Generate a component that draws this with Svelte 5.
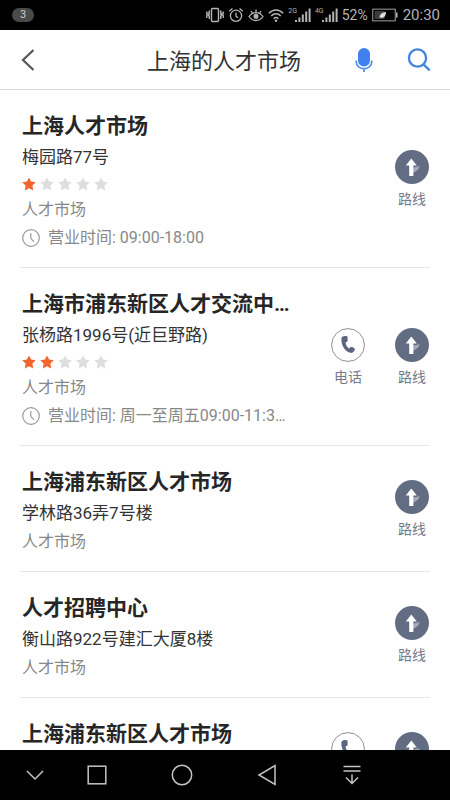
<script>
  const places = [
    { name: '上海人才市场', address: '梅园路77号', stars: 1, category: '人才市场', hours: '09:00-18:00' },
    {
      name: '上海市浦东新区人才交流中…',
      address: '张杨路1996号(近巨野路)',
      stars: 2,
      category: '人才市场',
      hours: '周一至周五09:00-11:3…',
      phone: true
    },
    { name: '上海浦东新区人才市场', address: '学林路36弄7号楼', category: '人才市场' },
    { name: '人才招聘中心', address: '衡山路922号建汇大厦8楼', category: '人才市场' },
    { name: '上海浦东新区人才市场', phone: true, compact: true }
  ];
</script>

{#snippet signal(label)}
  <span class="signal">
    <small>{label}</small>
    <svg width="16" height="16" viewBox="0 0 16 16" fill="currentColor">
      <path d="M0 13h2v2H0zM3.4 10.500h2V15h-2zM6.800 7.500h2V15h-2zM10.200 4.500h2V15h-2zM13.600 1.500h2V15h-2z" />
    </svg>
  </span>
{/snippet}

<div class="screen">
  <div class="status">
    <span class="count">3</span>
    <div class="indicators">
      <svg width="18" height="16" viewBox="0 0 18 16" fill="none" stroke="currentColor" stroke-width="1.400">
        <rect x="5.500" y="1.500" width="7" height="13" rx="1" />
        <path d="M3.300 3.500v2l-.8 1 .8 1-.8 1 .8 1v2.500M.8 4.500v2l.5 1-.5 1v2.500M14.700 3.500v2l.8 1-.8 1 .8 1-.8 1v2.500M17.200 4.500v2l-.5 1 .5 1v2.500" />
      </svg>
      <svg width="16" height="16" viewBox="0 0 16 16" fill="none" stroke="currentColor" stroke-width="1.300">
        <circle cx="8" cy="8.800" r="5.600" />
        <path d="M8 5.500v3.700l2 1.500M1.200 4.200 4.500 1.500M14.800 4.200 11.500 1.500" />
      </svg>
      <svg width="16" height="16" viewBox="0 0 16 16" fill="none" stroke="currentColor" stroke-width="1.300">
        <path d="M1 9.500c3.500-5.300 10.500-5.300 14 0-3.500 5.300-10.500 5.300-14 0ZM8 5.500V2.500M4.200 6 3 4M11.800 6 13 4" />
        <circle cx="8" cy="9.300" r="1.900" fill="currentColor" />
      </svg>
      <svg width="16" height="16" viewBox="0 0 16 16" fill="none" stroke="currentColor" stroke-width="1.500">
        <path d="M.8 6.200c4.200-4.400 10.200-4.400 14.400 0M3.200 9c2.800-2.900 6.800-2.900 9.600 0M5.600 11.700c1.400-1.400 3.400-1.400 4.800 0" />
        <circle cx="8" cy="13.800" r="1.300" fill="currentColor" stroke="none" />
      </svg>
      {@render signal('2G')}
      {@render signal('4G')}
      <span class="percent">52%</span>
      <svg width="27" height="14" viewBox="0 0 27 14">
        <rect x=".7" y="1.200" width="22.600" height="11.600" fill="none" stroke="#888" stroke-width="1.200" />
        <path d="M2.500 3h10v8h-10z" fill="#3c3c3c" />
        <path d="M8 10.500c-1.200-3.500 1.500-6 6-6.500-.1 4-2 6.500-5.200 5.600Z" fill="#ddd" />
        <path d="M24.800 4.500v5" stroke="#aaa" stroke-width="1.600" />
      </svg>
      <span class="time">20:30</span>
    </div>
  </div>

  <header>
    <button class="icon" aria-label="返回">
      <svg width="14" height="22" viewBox="0 0 14 22" fill="none" stroke="#555" stroke-width="2.200"><path d="M12.500 1 2 11l10.500 10" /></svg>
    </button>
    <h1>上海的人才市场</h1>
    <button class="icon" aria-label="语音">
      <svg width="18" height="26" viewBox="0 0 18 26">
        <rect x="3" y="1" width="12" height="18.500" rx="6" fill="#3f82ee" />
        <path d="M1.200 13.500v1c0 9.500 15.600 9.500 15.600 0v-1M9 21.500V25" fill="none" stroke="#5b93ec" stroke-width="1.800" />
      </svg>
    </button>
    <button class="icon search" aria-label="搜索">
      <svg width="24" height="24" viewBox="0 0 24 24" fill="none" stroke="#4385dc" stroke-width="2.300">
        <circle cx="10.500" cy="10" r="8.600" /><path d="m16.500 16.300 6.200 6" />
      </svg>
    </button>
  </header>

  <main>
    {#each places as place}
      <article>
        <div class="info">
          <h2>{place.name}</h2>
          {#if place.address}<p class="address">{place.address}</p>{/if}
          {#if place.stars}
            <div class="stars" role="img" aria-label="{place.stars} / 5">
              {#each [1, 2, 3, 4, 5] as n}
                <svg class:on={n <= place.stars} width="14" height="14" viewBox="0 0 14 14">
                  <path d="m7 .4 2.100 4.200 4.700.7-3.400 3.300.8 4.800L7 11.200l-4.200 2.200.8-4.800L.2 5.300l4.700-.7Z" />
                </svg>
              {/each}
            </div>
          {/if}
          {#if place.category}<p class="muted">{place.category}</p>{/if}
          {#if place.hours}
            <p class="muted hours">
              <svg width="18" height="18" viewBox="0 0 18 18" fill="none" stroke="#999" stroke-width="1.200">
                <circle cx="9" cy="9" r="8.300" /><path d="M8.800 4v5.300l3.200 3.500" />
              </svg>
              <span>营业时间: {place.hours}</span>
            </p>
          {/if}
        </div>
        <div class="actions">
          {#if place.phone}
            <button aria-label="电话">
              <svg width="34" height="34" viewBox="0 0 34 34">
                <circle cx="17" cy="17" r="16.400" fill="#fff" stroke="#8d8f98" />
                <path d="M11.300 8.800c1.300-.9 3-.9 4.600-.5.600.2.700.6.700 1.200v3.300c0 1-.7 1.300-2 1.600.2 2.600 1.600 4.700 3.700 6 .9-1.400 1.700-1.800 2.800-1.300l2 1c1 .5 1 1.200.5 2.200-.8 1.800-2.200 2.900-4 2.500-5.500-1.200-9.300-7.500-9.200-13.400 0-1.200.2-2.100.9-2.600Z" fill="#5d6680" />
              </svg>
              {#if !place.compact}<span>电话</span>{/if}
            </button>
          {/if}
          <button aria-label="路线">
            <svg width="34" height="34" viewBox="0 0 34 34">
              <circle cx="17" cy="17" r="17" fill="#626d84" />
              <path d="m18.200 17.800 6.600-1.800-1.800 3.800-4.800 3.200Z" fill="#a5abb8" />
              <path d="m16.300 8.600 5.500 7h-3.400V26h-4.200V15.600h-3.400Z" fill="#fff" />
            </svg>
            {#if !place.compact}<span>路线</span>{/if}
          </button>
        </div>
      </article>
    {/each}
  </main>

  <nav>
    <button aria-label="隐藏导航栏"><svg width="20" height="22" viewBox="0 0 20 22"><path d="m2 7 8 8 8-8" /></svg></button>
    <button aria-label="最近任务"><svg width="20" height="22" viewBox="0 0 20 22"><rect x="1.200" y="2.200" width="17.600" height="17.600" /></svg></button>
    <button aria-label="主屏幕"><svg width="22" height="22" viewBox="0 0 22 22"><circle cx="11" cy="11" r="9.700" /></svg></button>
    <button aria-label="后退"><svg width="20" height="22" viewBox="0 0 20 22"><path d="M18 1.500v19L2 11Z" /></svg></button>
    <button aria-label="通知栏"><svg width="20" height="22" viewBox="0 0 20 22"><path d="M1.500 2.500h17M1.500 7h17M10 10.500v9M4 13.500l6 6 6-6" /></svg></button>
  </nav>
</div>

<style>
  :global(body) { margin: 0; }
  .screen {
    display: flex;
    flex-direction: column;
    height: 100vh;
    overflow: hidden;
    background: #fff;
    color: #262626;
    font-family: Roboto, "Noto Sans CJK SC", sans-serif;
  }
  svg { display: block; flex: none; }
  button {
    padding: 0;
    border: 0;
    background: none;
    color: inherit;
    font: inherit;
    cursor: pointer;
  }
  h1, h2, p { margin: 0; }

  .status {
    display: flex;
    flex: none;
    align-items: center;
    justify-content: space-between;
    height: 30px;
    padding: 0 10px 0 12px;
    background: #000;
    color: #b4b4b4;
  }
  .count {
    width: 22px;
    border-radius: 7px;
    background: #4a4a4a;
    color: #ccc;
    font-size: 11px;
    line-height: 14px;
    text-align: center;
  }
  .indicators { display: flex; align-items: center; gap: 4px; }
  .signal { display: flex; align-items: center; }
  .signal small {
    align-self: flex-start;
    margin-right: -2px;
    font-size: 7px;
    line-height: 8px;
  }
  .percent { font-size: 14px; line-height: 20px; }
  .time { font-size: 15px; line-height: 20px; }

  header {
    display: flex;
    flex: none;
    align-items: center;
    box-sizing: border-box;
    height: 60px;
    padding: 0 19px 0 20px;
    border-bottom: 1px solid #d8d8d8;
  }
  header h1 {
    flex: 1;
    padding: 4px 0 0 60px;
    color: #333;
    font-size: 22px;
    font-weight: 400;
    line-height: 32px;
    text-align: center;
  }
  .icon { display: flex; justify-content: center; width: 24px; }
  .icon.search { margin-left: 31px; }
  header .icon:first-child { width: 16px; }

  main { flex: 1; min-height: 0; overflow: hidden; padding: 0 20px; }
  article {
    display: flex;
    justify-content: space-between;
    box-sizing: border-box;
    min-height: 126px;
    padding: 0 1px 0 2px;
    border-bottom: 1px solid #e6e6e6;
  }
  .info { min-width: 0; padding: 20px 0 15px; white-space: nowrap; }
  h2 { font-size: 21px; font-weight: 700; line-height: 32px; }
  .address { color: #333; font-size: 17px; line-height: 30px; }
  .stars { display: flex; align-items: center; gap: 4px; height: 24px; fill: #dedede; }
  .stars .on { fill: #f2662e; }
  .muted { color: #888; font-size: 16px; line-height: 28px; }
  .hours { display: flex; align-items: center; gap: 8px; }

  .actions { display: flex; align-items: center; gap: 30px; }
  .actions button {
    display: flex;
    flex-direction: column;
    align-items: center;
    gap: 6px;
    width: 34px;
    min-height: 58px;
    color: #757b8c;
    font-size: 14px;
    line-height: 18px;
  }

  nav {
    display: grid;
    flex: none;
    grid-template-columns: 70fr 54fr 116fr 54fr 116fr 40fr;
    align-items: center;
    height: 50px;
    background: #000;
  }
  nav button { display: flex; justify-content: center; }
  nav svg { fill: none; stroke: #c4c4c4; stroke-width: 1.5; }
</style>
